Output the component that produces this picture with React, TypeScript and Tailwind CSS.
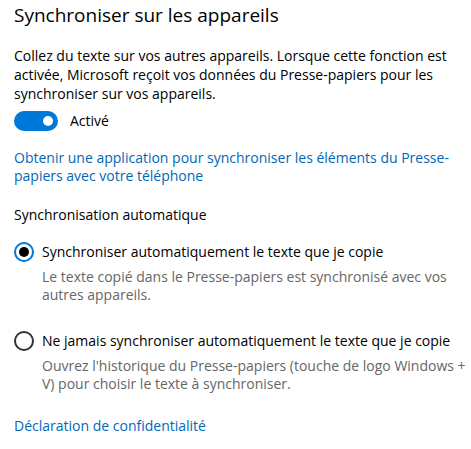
export default function App() {
  const font = { fontFamily: '"Open Sans", "Noto Sans", sans-serif' };
  return (
    <div className="h-[449px] w-[471px] overflow-hidden bg-white pl-[14px] text-[14px] text-black" style={font}>
      <h1 className="pt-px text-[19px] leading-[28px] font-normal text-black">Synchroniser sur les appareils</h1>

      <p className="mt-[17px] leading-[19px]">
        Collez du texte sur vos autres appareils. Lorsque cette fonction est
        <br />
        activée, Microsoft reçoit vos données du Presse-papiers pour les
        <br />
        synchroniser sur vos appareils.
      </p>

      <div className="mt-[8px] flex items-center gap-[12px]">
        <div className="flex h-[20px] w-[44px] items-center justify-end rounded-full bg-[#0078d7] pr-[5px]">
          <div className="h-[10px] w-[10px] rounded-full bg-white" />
        </div>
        <span className="leading-[20px]">Activé</span>
      </div>

      <a className="mt-[18px] block leading-[18px] text-[#0067b8]">
        Obtenir une application pour synchroniser les éléments du Presse-
        <br />
        papiers avec votre téléphone
      </a>

      <div className="mt-[20px] leading-[20px]">Synchronisation automatique</div>

      <div className="mt-[17px] flex items-center gap-[8px]">
        <div className="flex h-[20px] w-[20px] items-center justify-center rounded-full border-2 border-[#0078d7]">
          <div className="h-[10px] w-[10px] rounded-full bg-black" />
        </div>
        <span className="leading-[20px]">Synchroniser automatiquement le texte que je copie</span>
      </div>
      <p className="mt-[6px] pl-[28px] leading-[18px] text-[#666666]">
        Le texte copié dans le Presse-papiers est synchronisé avec vos
        <br />
        autres appareils.
      </p>

      <div className="mt-[27px] flex items-center gap-[8px]">
        <div className="h-[20px] w-[20px] rounded-full border-2 border-[#333333]" />
        <span className="leading-[20px]">Ne jamais synchroniser automatiquement le texte que je copie</span>
      </div>
      <p className="mt-[6px] pl-[28px] leading-[18px] text-[#666666]">
        Ouvrez l'historique du Presse-papiers (touche de logo Windows +
        <br />
        V) pour choisir le texte à synchroniser.
      </p>

      <a className="mt-[23px] block leading-[20px] text-[#0067b8]">Déclaration de confidentialité</a>
    </div>
  );
}
